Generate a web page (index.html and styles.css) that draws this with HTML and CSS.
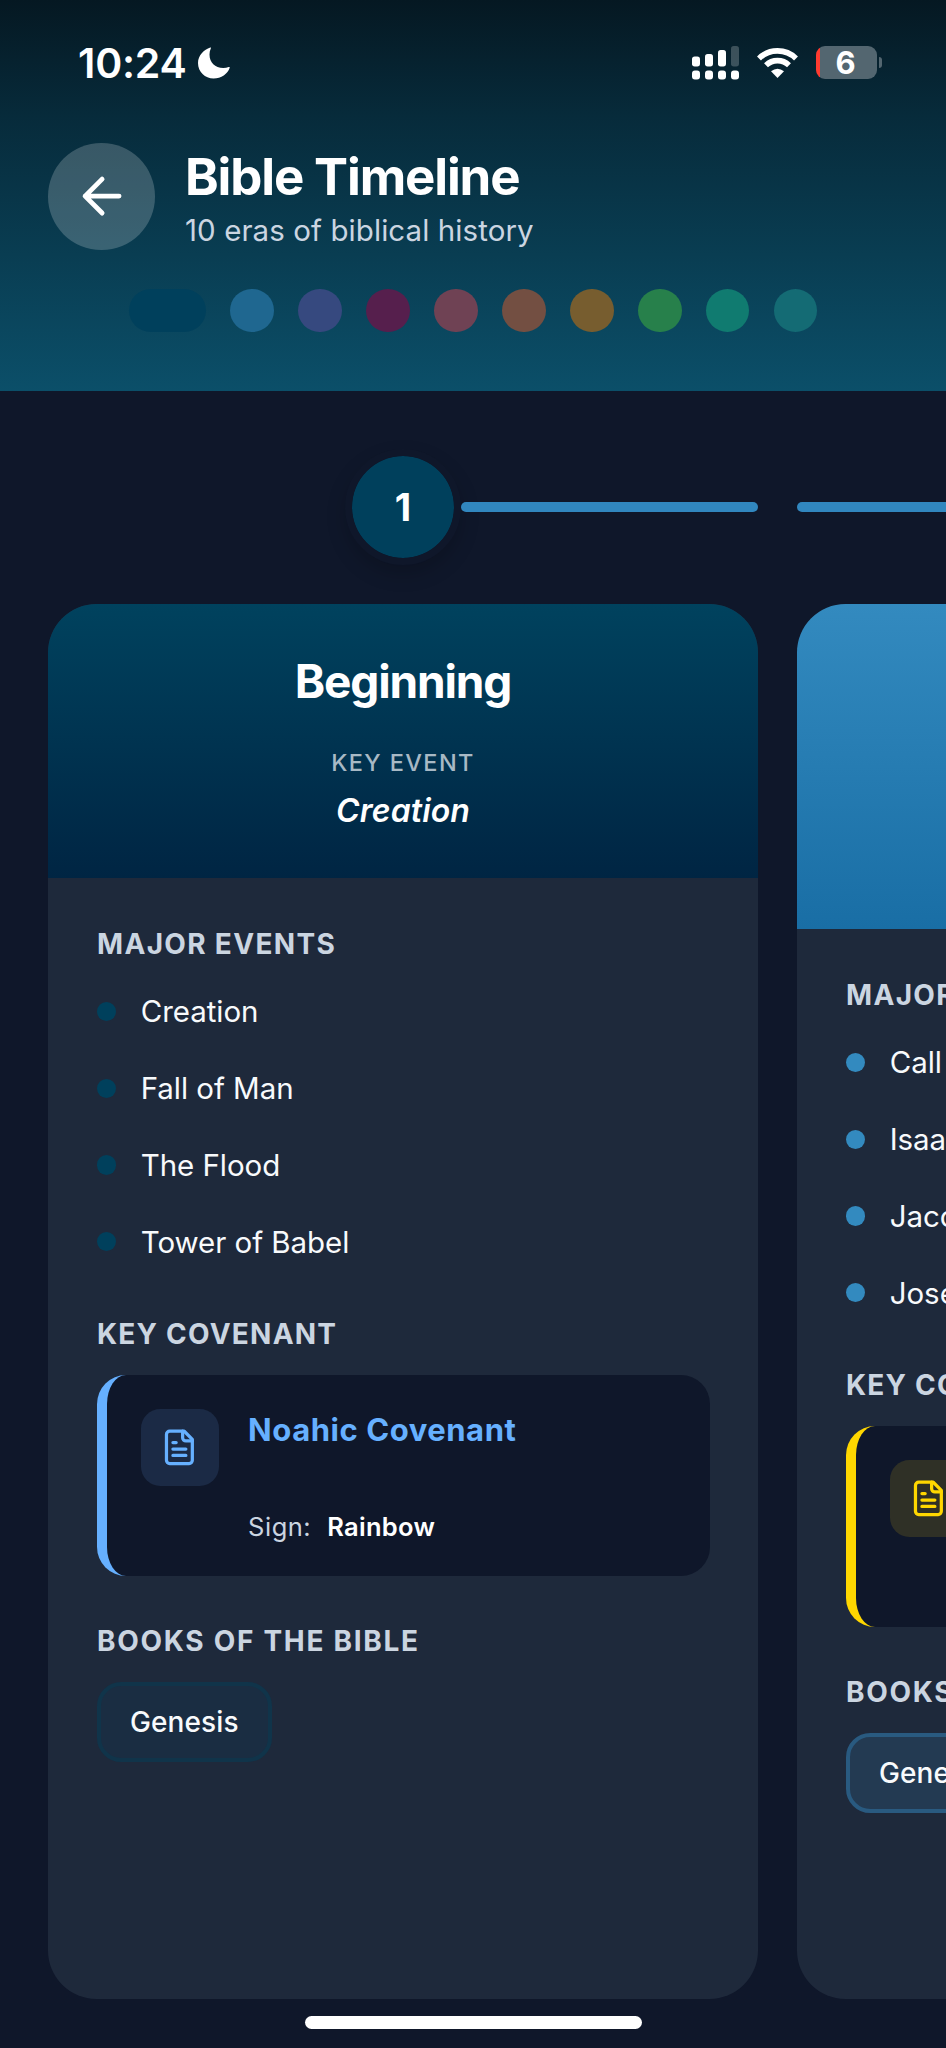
FILE: index.html
```html
<!DOCTYPE html>
<html lang="en">
<head>
<meta charset="utf-8">
<title>Bible Timeline</title>
<link rel="stylesheet" href="styles.css">
</head>
<body>
<div class="screen">
  <header class="header">
    <div class="status">
      <div class="status-left">
        <span class="time">10:24</span>
        <svg class="moon" viewBox="0 0 32 32"><path d="M12.3.6C6 2.500 0 8.600 0 16c0 8.800 7 15.500 15.600 15.500 7.600 0 14.200-4.600 16.100-10.700.2-.7-.4-1.100-1-.8-1.600.7-3.400 1-5.400 1C17 21 11.500 15.500 11.500 7.500c0-2.200.4-4.100 1.200-5.700.4-.8.300-1.400-.4-1.200z" fill="#fff"/></svg>
      </div>
      <div class="status-right">
        <svg class="signal" viewBox="0 0 47 34" fill="#fff">
          <rect x="0" y="10.500" width="8" height="10" rx="2.700"/><rect x="13" y="8" width="8" height="12.500" rx="2.700"/><rect x="26" y="4" width="8" height="16.500" rx="2.700"/><rect x="39" y="0" width="8" height="20.500" rx="2.700" fill-opacity=".22"/>
          <rect x="0" y="24.500" width="8" height="9" rx="2.900"/><rect x="13" y="24.500" width="8" height="9" rx="2.900"/><rect x="26" y="24.500" width="8" height="9" rx="2.900"/><rect x="39" y="24.500" width="8" height="9" rx="2.900"/>
        </svg>
        <svg class="wifi" viewBox="0 0 41 31" fill="none" stroke="#fff" stroke-width="5.600">
          <path d="M2 11.400A26.500 26.500 0 0 1 39 11.400"/><path d="M9 18.300A16.500 16.500 0 0 1 32 18.300"/><path d="M20.500 31 14 24.300Q20.500 19 27 24.300Z" fill="#fff" stroke="none"/>
        </svg>
        <div class="battery"><span class="battery-body">6</span><span class="battery-cap"></span></div>
      </div>
    </div>
    <div class="title-row">
      <div class="back"><svg viewBox="0 0 24 24"><path d="m12 19-7-7 7-7M19 12H5"/></svg></div>
      <div class="titles">
        <h1 class="title">Bible Timeline</h1>
        <p class="subtitle">10 eras of biblical history</p>
      </div>
    </div>
    <div class="dots">
      <i class="dot dot-active"></i><i class="dot c2"></i><i class="dot c3"></i><i class="dot c4"></i><i class="dot c5"></i><i class="dot c6"></i><i class="dot c7"></i><i class="dot c8"></i><i class="dot c9"></i><i class="dot c10"></i>
    </div>
  </header>

  <main class="timeline">
    <section class="era era-beginning">
      <div class="track"><span></span><div class="node">1</div><span class="line"></span></div>
      <article class="card">
        <div class="card-head">
          <h2 class="era-name">Beginning</h2>
          <p class="key-label">KEY EVENT</p>
          <p class="key-event">Creation</p>
        </div>
        <div class="card-body">
          <div class="group">
            <h3 class="heading major">MAJOR EVENTS</h3>
            <ul class="events"><li>Creation</li><li>Fall of Man</li><li>The Flood</li><li>Tower of Babel</li></ul>
          </div>
          <div class="group">
            <h3 class="heading covenant-heading">KEY COVENANT</h3>
            <div class="covenant">
              <div class="doc"><svg viewBox="0 0 24 24"><path d="M15 2H6a2 2 0 0 0-2 2v16a2 2 0 0 0 2 2h12a2 2 0 0 0 2-2V7Z"/><path d="M14 2v4a2 2 0 0 0 2 2h4M10 9H8M16 13H8M16 17H8"/></svg></div>
              <div class="covenant-text">
                <h4 class="covenant-name">Noahic Covenant</h4>
                <p class="sign"><span>Sign:</span><b>Rainbow</b></p>
              </div>
            </div>
          </div>
          <div class="group">
            <h3 class="heading books">BOOKS OF THE BIBLE</h3>
            <div class="tags"><span class="tag">Genesis</span></div>
          </div>
        </div>
      </article>
    </section>

    <section class="era era-patriarchs">
      <div class="track"><span class="line"></span><span></span><span class="line"></span></div>
      <article class="card">
        <div class="card-head"></div>
        <div class="card-body">
          <div class="group">
            <h3 class="heading major">MAJOR EVENTS</h3>
            <ul class="events"><li>Call of Abraham</li><li>Isaac</li><li>Jacob</li><li>Joseph</li></ul>
          </div>
          <div class="group">
            <h3 class="heading covenant-heading">KEY COVENANT</h3>
            <div class="covenant">
              <div class="doc"><svg viewBox="0 0 24 24"><path d="M15 2H6a2 2 0 0 0-2 2v16a2 2 0 0 0 2 2h12a2 2 0 0 0 2-2V7Z"/><path d="M14 2v4a2 2 0 0 0 2 2h4M10 9H8M16 13H8M16 17H8"/></svg></div>
            </div>
          </div>
          <div class="group">
            <h3 class="heading books">BOOKS OF THE BIBLE</h3>
            <div class="tags"><span class="tag">Genesis</span></div>
          </div>
        </div>
      </article>
    </section>
  </main>
  <div class="home-indicator"></div>
</div>
</body>
</html>
```
FILE: styles.css
```css
* { box-sizing: border-box; margin: 0; padding: 0; }
body { background: #0f172a; font-family: Inter, "Liberation Sans", sans-serif; color: #fff; }
.screen { position: relative; width: 946px; height: 2048px; overflow: hidden; background: #0f172a; }

.header { height: 391px; background: linear-gradient(180deg, #051822 0%, #072b3b 30%, #0b4f69 100%); }
.status { display: flex; justify-content: space-between; height: 143px; padding: 39px 64px 0 78px; }
.status-left, .status-right { display: flex; align-items: center; height: 48px; }
.status-right { height: 47px; }
.time { font-size: 41px; line-height: 48px; font-weight: 600; letter-spacing: -0.200px; width: 119.500px; }
.moon { width: 32px; height: 32px; }
.signal { width: 47px; height: 34px; margin-right: 18px; }
.wifi { width: 41px; height: 31px; margin-right: 18px; }
.battery { display: flex; align-items: center; gap: 2px; }
.battery-body { width: 61px; height: 33px; border-radius: 9px; background: linear-gradient(90deg, #ff3b30 4px, #536670 4px); font-size: 31px; line-height: 33px; font-weight: 700; text-align: center; padding-right: 2px; }
.battery-cap { width: 3px; height: 11px; border-radius: 0 4px 4px 0; background: #536670; }

.title-row { display: flex; gap: 30px; height: 107px; padding-left: 48.300px; }
.back { display: flex; align-items: center; justify-content: center; width: 106.700px; height: 106.700px; border-radius: 50%; background: rgba(255, 255, 255, .2); }
.back svg { width: 58.200px; height: 58.200px; fill: none; stroke: #fff; stroke-width: 2; stroke-linecap: round; stroke-linejoin: round; }
.titles { padding-top: 2px; }
.title { font-size: 51px; line-height: 64px; font-weight: 700; letter-spacing: -1.150px; }
.subtitle { font-size: 29.500px; line-height: 42px; color: #cbd5e1; letter-spacing: 0.080px; }
.dots { display: flex; justify-content: center; gap: 24.260px; padding-top: 38.800px; }
.dot { width: 43.660px; height: 43.660px; border-radius: 22px; }
.dot-active { width: 77.600px; background: #00405c; }
.c2 { background: #1f6790; }
.c3 { background: #36497f; }
.c4 { background: #561f4d; }
.c5 { background: #6f4254; }
.c6 { background: #734f42; }
.c7 { background: #775d2f; }
.c8 { background: #27804b; }
.c9 { background: #107b70; }
.c10 { background: #146b74; }

.timeline { display: flex; gap: 39px; padding: 57.700px 0 0 48px; }
.era { flex: none; width: 710px; }
.track { display: grid; grid-template-columns: 1fr 116px 1fr; align-items: center; height: 116px; margin-bottom: 39.300px; }
.node { display: flex; align-items: center; justify-content: center; width: 116px; height: 116px; border: 7px solid #0f172a; border-radius: 50%; background: #00405c; background-clip: padding-box; box-shadow: 0 9px 19px rgba(0, 0, 0, .18); font-size: 38px; font-weight: 700; }
.line { height: 10px; border-radius: 5px; background: #3187bf; }
.card { height: 1395px; border-radius: 48.500px; overflow: hidden; background: #1e293b; }
.card-head { height: 274.500px; padding-top: 48.500px; text-align: center; background: linear-gradient(180deg, #00425e, #002543); }
.era-patriarchs .card-head { height: 325.500px; background: linear-gradient(180deg, #338abf, #196ea5); }
.era-name { font-size: 46px; line-height: 58px; font-weight: 700; letter-spacing: -1.150px; }
.key-label { margin-top: 38px; font-size: 23.500px; line-height: 30px; font-weight: 500; letter-spacing: 1.400px; color: #a8b9c5; }
.key-event { margin-top: 12px; font-size: 32px; line-height: 42px; font-weight: 560; font-style: italic; letter-spacing: 0.100px; }

.card-body { display: flex; flex-direction: column; gap: 48.500px; padding: 49px 48px 49px 49px; }
.group { display: flex; flex-direction: column; gap: 23px; }
.heading { font-size: 28px; line-height: 35px; font-weight: 700; white-space: nowrap; color: #cbd5e1; }
.major { letter-spacing: 1.320px; }
.covenant-heading { letter-spacing: 1.220px; }
.books { letter-spacing: 1.700px; }
.events { display: flex; flex-direction: column; gap: 24.300px; list-style: none; }
.events li { display: flex; align-items: center; gap: 24.300px; font-size: 29.500px; line-height: 52.400px; letter-spacing: -0.050px; color: #f8fafc; white-space: nowrap; }
.events li::before { content: ""; width: 19.400px; height: 19.400px; border-radius: 50%; background: #00405c; }
.era-patriarchs .events li::before { background: #338abf; }
.covenant { display: flex; gap: 29.500px; height: 201px; padding: 34px; border-left: 10px solid #66b0ff; border-radius: 29px; background: #0f172a; }
.doc { flex: none; display: flex; align-items: center; justify-content: center; width: 77.600px; height: 77.600px; border-radius: 19.400px; background: #1b2a45; }
.doc svg { width: 38.800px; height: 38.800px; fill: none; stroke: #66b0ff; stroke-width: 2; stroke-linecap: round; stroke-linejoin: round; }
.era-patriarchs .covenant { border-left-color: #ffd700; }
.era-patriarchs .doc { background: #2f3026; }
.era-patriarchs .doc svg { stroke: #ffd700; }
.covenant-text { display: flex; flex-direction: column; justify-content: space-between; }
.covenant-name { font-size: 31px; line-height: 42px; font-weight: 700; letter-spacing: 0.550px; color: #66b0ff; }
.sign { display: flex; gap: 16px; font-size: 25.500px; line-height: 30px; letter-spacing: 0.500px; color: #cbd5e1; }
.sign b { font-weight: 600; letter-spacing: 0.300px; color: #fff; }
.tags { display: flex; }
.tag { padding: 0 29px; border: 4px solid #10344a; border-radius: 24.300px; height: 80px; background: #1a2d42; font-size: 28px; line-height: 72px; font-weight: 540; letter-spacing: 0.100px; color: #f8fafc; }
.era-patriarchs .tag { border-color: #295a80; background: #233a52; }

.home-indicator { position: absolute; left: 305px; bottom: 19px; width: 337px; height: 13px; border-radius: 7px; background: #fff; }
```
